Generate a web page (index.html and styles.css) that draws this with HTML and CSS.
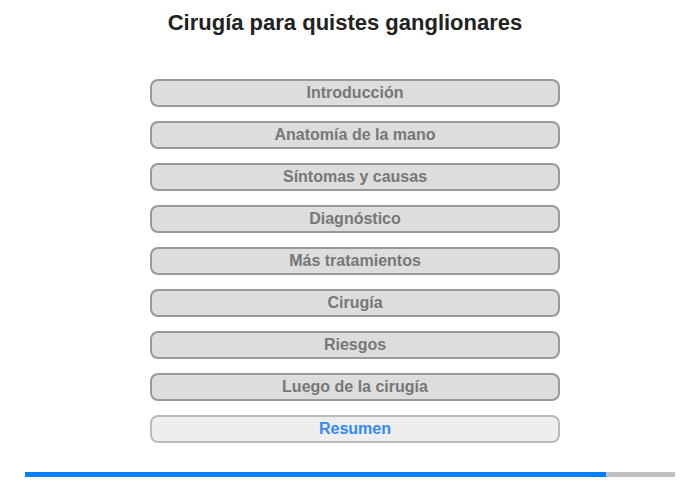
FILE: index.html
```html
<!DOCTYPE html>
<html lang="es">
<head>
    <meta charset="UTF-8">
    <meta name="viewport" content="width=device-width, initial-scale=1.0">
    <title>Cirugía para quistes ganglionares</title>
    <link rel="stylesheet" href="styles.css">
</head>
<body>

    <div class="page">
        <h1 class="title">Cirugía para quistes ganglionares</h1>

        <!-- Chapter menu -->
        <div class="menu">
            <button class="chapter">Introducción</button>
            <button class="chapter">Anatomía de la mano</button>
            <button class="chapter">Síntomas y causas</button>
            <button class="chapter">Diagnóstico</button>
            <button class="chapter">Más tratamientos</button>
            <button class="chapter">Cirugía</button>
            <button class="chapter">Riesgos</button>
            <button class="chapter">Luego de la cirugía</button>
            <button class="chapter current">Resumen</button>
        </div>

        <!-- Progress -->
        <div class="progress">
            <div class="progress-fill" style="width: 89.4%"></div>
        </div>
    </div>

</body>
</html>
```

FILE: styles.css
```css
body {
    font-family: "Liberation Sans", Arial, sans-serif;
    background-color: #ffffff;
    margin: 0;
}
.page {
    width: 700px;
    height: 480px;
    display: flex;
    flex-direction: column;
    align-items: center;
}
.title {
    font-size: 22px;
    font-weight: bold;
    color: #222222;
    margin: 10px 10px 0 0;
    line-height: 26px;
}
.menu {
    display: flex;
    flex-direction: column;
    gap: 14px;
    margin: 43px 0 0 10px;
    width: 410px;
}
.chapter {
    height: 28px;
    width: 100%;
    background: #dddddd;
    border: 2px solid #999999;
    border-radius: 8px;
    font-family: "Liberation Sans", Arial, sans-serif;
    font-size: 16px;
    font-weight: bold;
    color: #777777;
    padding: 0;
    cursor: pointer;
}
.current {
    background: #eeeeee;
    border-color: #bbbbbb;
    color: #3388ff;
}
.progress {
    width: 650px;
    height: 5px;
    background: #c0c0c0;
    margin-top: 29px;
}
.progress-fill {
    height: 100%;
    background: #0080ff;
}
```
